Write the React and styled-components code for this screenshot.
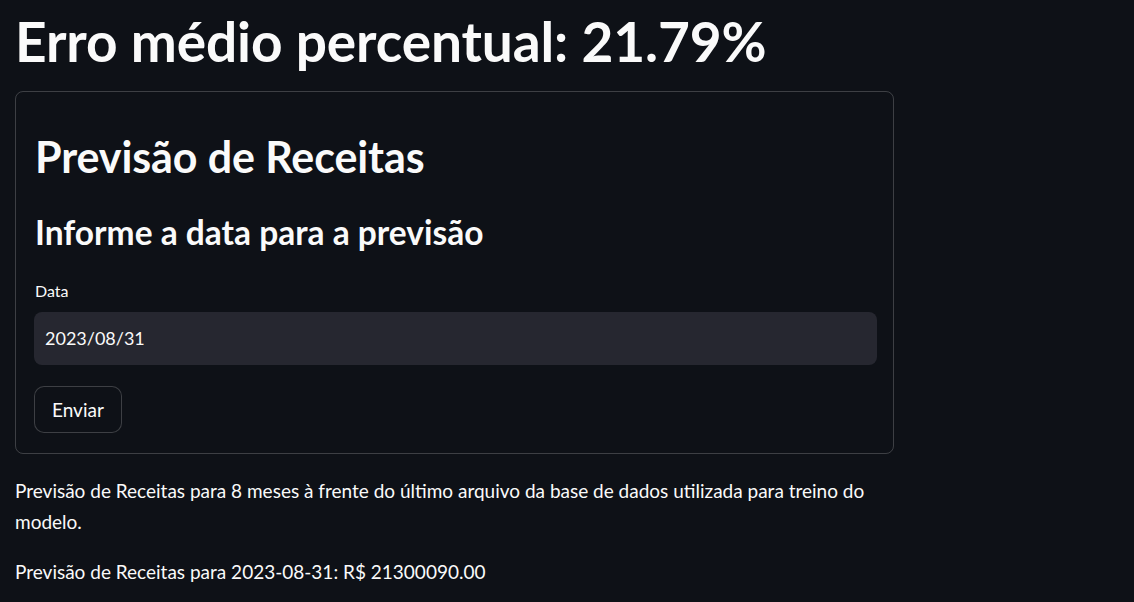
import React from "react";
import styled, { createGlobalStyle } from "styled-components";

const Global = createGlobalStyle`
  html, body { margin: 0; padding: 0; background: #0e1117; }
  body { font-family: Lato, "Noto Sans", sans-serif; color: #fafafa; }
  * { box-sizing: border-box; }
`;

const Main = styled.main`
  width: 879px;
  margin-left: 15px;
  padding-top: 8px;
  display: flex;
  flex-direction: column;
`;

const Title = styled.h1`
  margin: 0;
  font-size: 55px;
  font-weight: 700;
  line-height: 66px;
  letter-spacing: -0.1px;
`;

const Form = styled.form`
  margin-top: 17px;
  border: 1px solid rgba(250, 250, 250, 0.2);
  border-radius: 8px;
  padding: 19px 16px 20px 18px;
  display: flex;
  flex-direction: column;
`;

const Heading = styled.h2`
  margin: 20px 0 0 1px;
  font-size: 43px;
  font-weight: 700;
  line-height: 1.2;
  letter-spacing: -0.1px;
`;

const Sub = styled.h3`
  margin: 29px 0 0 1px;
  font-size: 33.5px;
  font-weight: 700;
  line-height: 1.2;
`;

const Label = styled.label`
  margin: 28px 0 0 1px;
  font-size: 16px;
  line-height: 21px;
`;

const Input = styled.input`
  margin-top: 11px;
  width: 100%;
  height: 53px;
  border: none;
  border-radius: 8px;
  background: #262730;
  color: #fafafa;
  font-family: Lato, "Noto Sans", sans-serif;
  font-size: 18px;
  padding: 0 11px;
  outline: none;
`;

const Button = styled.button`
  margin-top: 21px;
  align-self: flex-start;
  height: 47px;
  padding: 0 17px;
  border: 1px solid rgba(250, 250, 250, 0.2);
  border-radius: 10px;
  background: #0e1117;
  color: #fafafa;
  font-family: Lato, "Noto Sans", sans-serif;
  font-size: 19px;
`;

const Text = styled.p`
  margin: ${(p) => p.$top}px 0 0;
  font-size: 19px;
  line-height: 31px;
`;

export default function App() {
  return (
    <>
      <Global />
      <Main>
        <Title>Erro médio percentual: 21.79%</Title>
        <Form onSubmit={(e) => e.preventDefault()}>
          <Heading>Previsão de Receitas</Heading>
          <Sub>Informe a data para a previsão</Sub>
          <Label>Data</Label>
          <Input defaultValue="2023/08/31" />
          <Button type="button">Enviar</Button>
        </Form>
        <Text $top={21}>
          Previsão de Receitas para 8 meses à frente do último arquivo da base de dados utilizada para treino do modelo.
        </Text>
        <Text $top={19}>Previsão de Receitas para 2023-08-31: R$ 21300090.00</Text>
      </Main>
    </>
  );
}
